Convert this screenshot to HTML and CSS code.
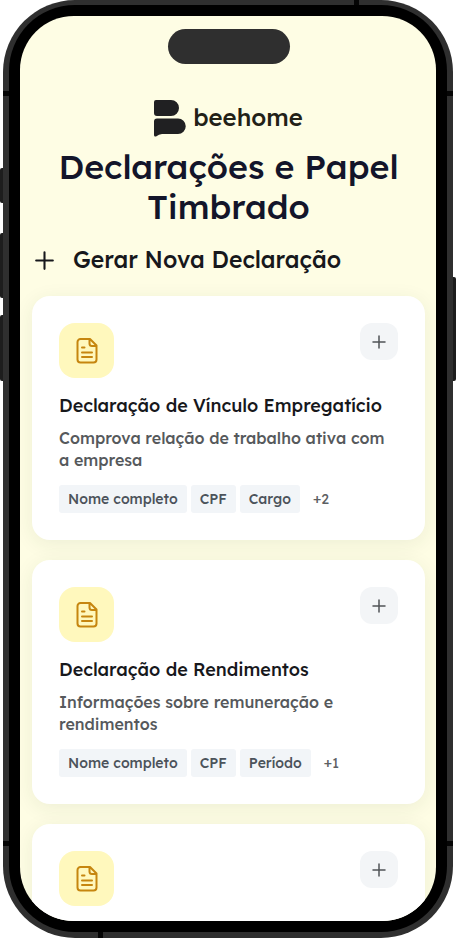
FILE: index.html
```html
<!DOCTYPE html>
<html lang="pt-BR">
<head>
<meta charset="utf-8">
<meta name="viewport" content="width=device-width, initial-scale=1">
<title>beehome – Declarações e Papel Timbrado</title>
<link rel="stylesheet" href="styles.css">
</head>
<body>
<svg class="sprite" aria-hidden="true">
  <symbol id="plus" viewBox="0 0 24 24"><path d="M12 4v16M4 12h16"/></symbol>
  <symbol id="doc" viewBox="0 0 24 28"><path d="M15 2H5.500a3 3 0 0 0-3 3v17.500a3 3 0 0 0 3 3h13a3 3 0 0 0 3-3V8.500zM14.500 2.500v4a2.500 2.500 0 0 0 2.500 2.500h4M7 10.500h2.500M7 15.500h10M7 20h10"/></symbol>
</svg>
<div class="phone">
  <span class="key key-action"></span>
  <span class="key key-up"></span>
  <span class="key key-down"></span>
  <span class="key key-power"></span>
  <span class="seam seam-top"></span>
  <span class="seam seam-bottom"></span>
  <span class="seam seam-side seam-high"></span>
  <span class="seam seam-side seam-low"></span>
  <div class="bezel">
    <main class="screen">
      <div class="island"></div>
      <div class="logo">
        <svg class="logo-mark" viewBox="0 0 32 37" aria-hidden="true"><path d="M2 0H17a8 8 0 0 1 0 16H3a3 3 0 0 1-3-3V2a2 2 0 0 1 2-2zM3 18.500H24a7.750 7.750 0 0 1 0 15.500H8Q5 34 2 36.500Q0 37 0 35V21.500a3 3 0 0 1 3-3z"/></svg>
        <span class="logo-name">beehome</span>
      </div>
      <h1 class="title">Declarações e Papel Timbrado</h1>
      <h2 class="section"><svg class="section-icon" aria-hidden="true"><use href="#plus"/></svg>Gerar Nova Declaração</h2>
      <div class="cards">
        <article class="card">
          <div class="card-top">
            <span class="badge"><svg class="doc" aria-hidden="true"><use href="#doc"/></svg></span>
            <button class="add" type="button" aria-label="Gerar"><svg class="add-icon" aria-hidden="true"><use href="#plus"/></svg></button>
          </div>
          <h3 class="card-title">Declaração de Vínculo Empregatício</h3>
          <p class="card-text">Comprova relação de trabalho ativa com a empresa</p>
          <div class="tags"><span class="tag">Nome completo</span><span class="tag">CPF</span><span class="tag">Cargo</span><span class="more">+2</span></div>
        </article>
        <article class="card">
          <div class="card-top">
            <span class="badge"><svg class="doc" aria-hidden="true"><use href="#doc"/></svg></span>
            <button class="add" type="button" aria-label="Gerar"><svg class="add-icon" aria-hidden="true"><use href="#plus"/></svg></button>
          </div>
          <h3 class="card-title">Declaração de Rendimentos</h3>
          <p class="card-text">Informações sobre remuneração e rendimentos</p>
          <div class="tags"><span class="tag">Nome completo</span><span class="tag">CPF</span><span class="tag">Período</span><span class="more">+1</span></div>
        </article>
        <article class="card">
          <div class="card-top">
            <span class="badge"><svg class="doc" aria-hidden="true"><use href="#doc"/></svg></span>
            <button class="add" type="button" aria-label="Gerar"><svg class="add-icon" aria-hidden="true"><use href="#plus"/></svg></button>
          </div>
        </article>
      </div>
    </main>
  </div>
</div>
</body>
</html>
```
FILE: styles.css
```css
* { box-sizing: border-box; }
body {
  margin: 0;
  background: #fff;
  color: #17181c;
  font-family: Lexend, Inter, "Noto Sans", sans-serif;
}
h1, h2, h3, p { margin: 0; font-weight: 500; }
.sprite { position: absolute; width: 0; height: 0; }
svg { fill: none; stroke: currentColor; stroke-linecap: round; stroke-linejoin: round; }

/* Device frame */
.phone {
  position: relative;
  height: 100vh;
  margin: 0 3px;
  padding: 5px 6px 6px;
  background: #2f2f2f;
  border-radius: 72px;
}
.bezel {
  position: relative;
  height: 100%;
  padding: 11px;
  background: #000;
  border-radius: 66px;
}
.screen {
  height: 100%;
  padding: 13px 11px 0 12px;
  overflow: hidden;
  background: #fefde4;
  border-radius: 54px;
}
.key { position: absolute; left: -3px; width: 3px; background: #1d1d1d; border-radius: 2px 0 0 2px; }
.key-action { top: 168px; height: 35px; }
.key-up { top: 233px; height: 65px; }
.key-down { top: 315px; height: 66px; }
.key-power { top: 277px; right: -3px; left: auto; height: 104px; border-radius: 0 2px 2px 0; }
.seam { position: absolute; width: 5px; height: 6px; background: #050505; }
.seam-top { top: 0; right: 94px; }
.seam-bottom { bottom: 0; left: 95px; }
.seam-side { left: 0; width: 100%; height: 5px; }
.seam-high { top: 91px; }
.seam-low { bottom: 92px; }

/* Header */
.island { width: 122px; height: 35px; margin: 0 auto; background: #2f2f2f; border-radius: 18px; }
.logo {
  display: flex;
  align-items: center;
  justify-content: center;
  gap: 7px;
  margin-top: 36px;
  color: #222117;
}
.logo-mark { width: 32px; height: 37px; fill: #202022; stroke: none; }
.logo-name { font-size: 24px; font-weight: 500; line-height: 34px; padding-bottom: 3px; }
.title { margin-top: 10px; color: #13152a; font-size: 34px; line-height: 40px; text-align: center; }
.section {
  display: flex;
  align-items: center;
  gap: 16px;
  margin-top: 19px;
  font-size: 23px;
  line-height: 28px;
}
.section-icon { width: 25px; height: 25px; stroke-width: 2; }

/* Cards */
.cards { display: grid; gap: 20px; margin-top: 22px; }
.card {
  padding: 27px;
  background: #fff;
  border-radius: 18px;
  box-shadow: 0 4px 20px rgba(40, 60, 40, 0.08);
}
.card-top { display: flex; align-items: flex-start; justify-content: space-between; }
.badge {
  display: grid;
  place-items: center;
  width: 55px;
  height: 55px;
  color: #c6860f;
  background: #fff8bd;
  border-radius: 16px;
}
.doc { width: 24px; height: 28px; stroke-width: 2; }
.add {
  display: grid;
  place-items: center;
  width: 38px;
  height: 37px;
  padding: 0;
  color: #505357;
  background: #f3f5f7;
  border: 0;
  border-radius: 12px;
}
.add-icon { width: 18px; height: 18px; stroke-width: 2; }
.card-title { margin-top: 16px; font-size: 18px; line-height: 24px; }
.card-text { margin-top: 9px; color: #56595c; font-size: 16px; line-height: 22px; }
.tags { display: flex; gap: 4px; margin-top: 14px; color: #4c535b; font-size: 14px; font-weight: 500; line-height: 28px; }
.tag { padding: 0 9px; background: #f2f5f8; border-radius: 3px; }
.more { padding: 0 9px; color: #5d6063; font-weight: 400; }
```
